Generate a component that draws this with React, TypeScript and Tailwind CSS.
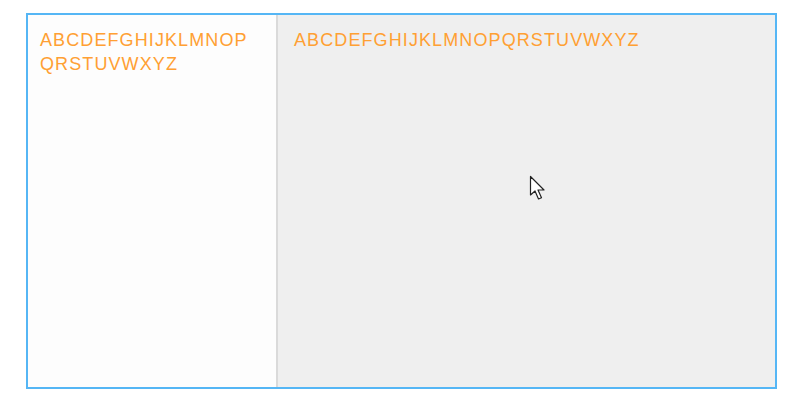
import React from "react";

export default function App() {
  return (
    <div className="w-[810px] h-[415px] bg-white pl-[26px] pt-[13px]" style={{ fontFamily: '"Liberation Sans", Arial, sans-serif' }}>
      <div className="relative w-[751px] h-[376px] border-2 border-[#55b6f5] flex">
        <div className="w-[248px] h-full bg-[#fdfdfd] pl-[12px] pr-[14px] pt-[13px]">
          <div className="text-[18px] leading-[24px] tracking-[1.1px] text-[#ffa033] break-all">
            ABCDEFGHIJKLMNOPQRSTUVWXYZ
          </div>
        </div>
        <div className="w-[2px] h-full bg-[#dadada]" />
        <div className="flex-1 h-full bg-[#efefef] pl-[16px] pt-[13px]">
          <div className="text-[18px] leading-[24px] tracking-[1.1px] text-[#ffa033]">
            ABCDEFGHIJKLMNOPQRSTUVWXYZ
          </div>
        </div>
        <svg className="absolute left-[501px] top-[160px]" width="20" height="28" viewBox="0 0 20 28">
          <path d="M1.5 1.5 L1.5 20 L6 16 L9.5 24 L12.5 22.8 L9 15 L15 15 Z" fill="#ffffff" stroke="#222222" strokeWidth="1.2" strokeLinejoin="round" />
        </svg>
      </div>
    </div>
  );
}
